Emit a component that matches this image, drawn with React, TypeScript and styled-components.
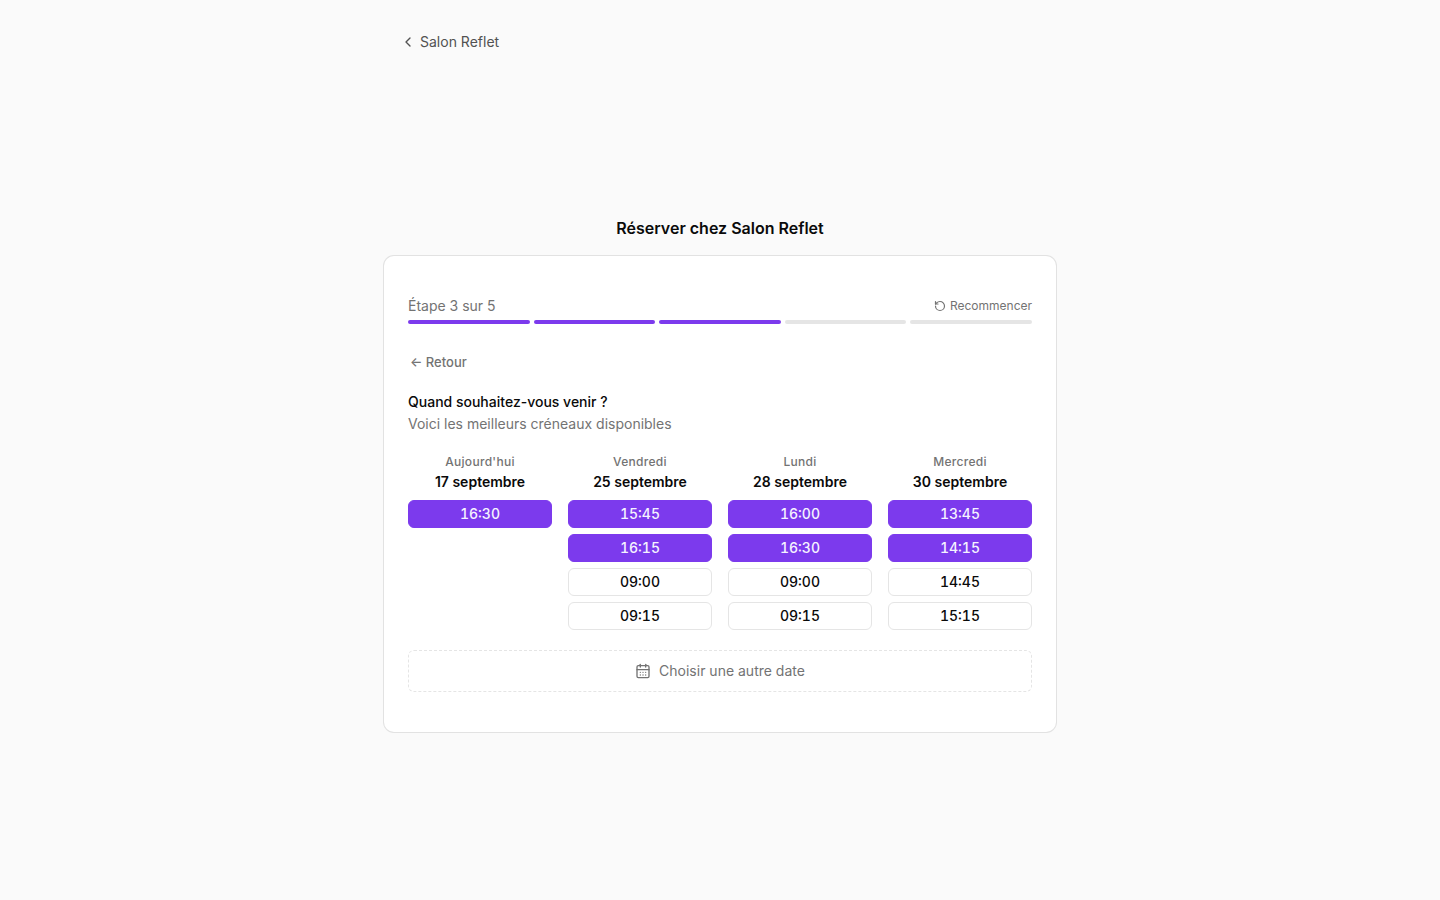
import React from "react";
import styled, { createGlobalStyle } from "styled-components";
import { CalendarDays, ChevronLeft, RotateCcw } from "lucide-react";

const GlobalStyle = createGlobalStyle`
  *, *::before, *::after { box-sizing: border-box; }
  body {
    margin: 0;
    background: #fafafa;
    color: #0a0a0a;
    font-family: Inter, "Noto Sans", sans-serif;
    font-size: 14px;
    line-height: 20px;
    -webkit-font-smoothing: antialiased;
  }
  button { font: inherit; color: inherit; margin: 0; cursor: pointer; }
  h1, h2, h3, p, ul { margin: 0; padding: 0; }
`;

const Page = styled.div`
  min-height: 100vh;
  display: flex;
  flex-direction: column;
`;

const Header = styled.header`
  width: 100%;
  max-width: 672px;
  margin: 0 auto;
  padding: 24px 16px 0;
`;

const SalonLink = styled.a`
  display: inline-flex;
  align-items: center;
  gap: 4px;
  height: 36px;
  color: #525252;
  text-decoration: none;
`;

const Main = styled.main`
  flex: 1;
  width: 100%;
  max-width: 672px;
  margin: 0 auto;
  padding-bottom: 12px;
  display: flex;
  flex-direction: column;
  justify-content: center;
  gap: 16px;
`;

const PageTitle = styled.h1`
  font-size: 16px;
  line-height: 24px;
  font-weight: 600;
  text-align: center;
`;

const Card = styled.section`
  padding: 40px 24px;
  border-radius: 10px;
  background: #ffffff;
  box-shadow: 0 0 0 1px #e2e2e2;
`;

const ProgressHeader = styled.div`
  display: flex;
  align-items: center;
  justify-content: space-between;
  color: #737373;
`;

const RestartButton = styled.button`
  display: inline-flex;
  align-items: center;
  gap: 4px;
  padding: 0;
  border: 0;
  background: none;
  font-size: 12px;
  line-height: 16px;
`;

const Steps = styled.div`
  display: flex;
  gap: 4px;
  margin-top: 4px;
`;

const Step = styled.span<{ $done: boolean }>`
  flex: 1;
  height: 4px;
  border-radius: 2px;
  background: ${({ $done }) => ($done ? "#7c3aed" : "#e5e5e5")};
`;

const BackButton = styled.button`
  display: flex;
  align-items: center;
  height: 28px;
  margin-top: 24px;
  padding: 0 2px;
  border: 0;
  background: none;
  color: #737373;
  font-size: 13px;
  font-weight: 500;
`;

const Question = styled.h2`
  margin-top: 16px;
  font-size: 14px;
  font-weight: 500;
`;

const Hint = styled.p`
  margin-top: 2px;
  color: #737373;
`;

const Days = styled.div`
  display: grid;
  grid-template-columns: repeat(4, minmax(0, 1fr));
  gap: 16px;
  margin-top: 20px;
`;

const DayHeading = styled.h3`
  display: flex;
  flex-direction: column;
  gap: 2px;
  text-align: center;
  font-size: 14px;
  font-weight: 600;
`;

const Weekday = styled.span`
  color: #737373;
  font-size: 12px;
  line-height: 16px;
  font-weight: 500;
  letter-spacing: 0.025em;
`;

const Slots = styled.ul`
  display: flex;
  flex-direction: column;
  gap: 6px;
  margin-top: 8px;
  list-style: none;
`;

const SlotButton = styled.button<{ $best: boolean }>`
  display: block;
  width: 100%;
  height: 28px;
  padding: 0;
  border: 1px solid ${({ $best }) => ($best ? "#7c3aed" : "#e5e5e5")};
  border-radius: 6px;
  background: ${({ $best }) => ($best ? "#7c3aed" : "#ffffff")};
  color: ${({ $best }) => ($best ? "#f5f3ff" : "#0a0a0a")};
  font-weight: 500;
  font-variant-numeric: tabular-nums;
`;

const OtherDateButton = styled.button`
  display: flex;
  align-items: center;
  justify-content: center;
  gap: 8px;
  width: 100%;
  margin-top: 20px;
  padding: 10px 16px;
  border: 1px dashed #e5e5e5;
  border-radius: 6px;
  background: none;
  color: #737373;
`;

const days = [
  { weekday: "Aujourd'hui", date: "17 septembre", best: ["16:30"], others: [] },
  { weekday: "Vendredi", date: "25 septembre", best: ["15:45", "16:15"], others: ["09:00", "09:15"] },
  { weekday: "Lundi", date: "28 septembre", best: ["16:00", "16:30"], others: ["09:00", "09:15"] },
  { weekday: "Mercredi", date: "30 septembre", best: ["13:45", "14:15"], others: ["14:45", "15:15"] },
];

const STEP_COUNT = 5;
const CURRENT_STEP = 3;

export default function App() {
  return (
    <Page>
      <GlobalStyle />
      <Header>
        <SalonLink href="#">
          <ChevronLeft size={16} aria-hidden />
          Salon Reflet
        </SalonLink>
      </Header>
      <Main>
        <PageTitle>Réserver chez Salon Reflet</PageTitle>
        <Card>
          <ProgressHeader>
            <span>Étape {CURRENT_STEP} sur {STEP_COUNT}</span>
            <RestartButton type="button">
              <RotateCcw size={12} strokeWidth={2.4} aria-hidden />
              Recommencer
            </RestartButton>
          </ProgressHeader>
          <Steps>
            {Array.from({ length: STEP_COUNT }, (_, i) => (
              <Step key={i} $done={i < CURRENT_STEP} />
            ))}
          </Steps>
          <BackButton type="button">← Retour</BackButton>
          <Question>Quand souhaitez-vous venir ?</Question>
          <Hint>Voici les meilleurs créneaux disponibles</Hint>
          <Days>
            {days.map((day) => (
              <div key={day.date}>
                <DayHeading>
                  <Weekday>{day.weekday}</Weekday>
                  <span>{day.date}</span>
                </DayHeading>
                <Slots>
                  {[...day.best, ...day.others].map((time) => (
                    <li key={time}>
                      <SlotButton type="button" $best={day.best.includes(time)}>
                        {time}
                      </SlotButton>
                    </li>
                  ))}
                </Slots>
              </div>
            ))}
          </Days>
          <OtherDateButton type="button">
            <CalendarDays size={16} aria-hidden />
            Choisir une autre date
          </OtherDateButton>
        </Card>
      </Main>
    </Page>
  );
}
